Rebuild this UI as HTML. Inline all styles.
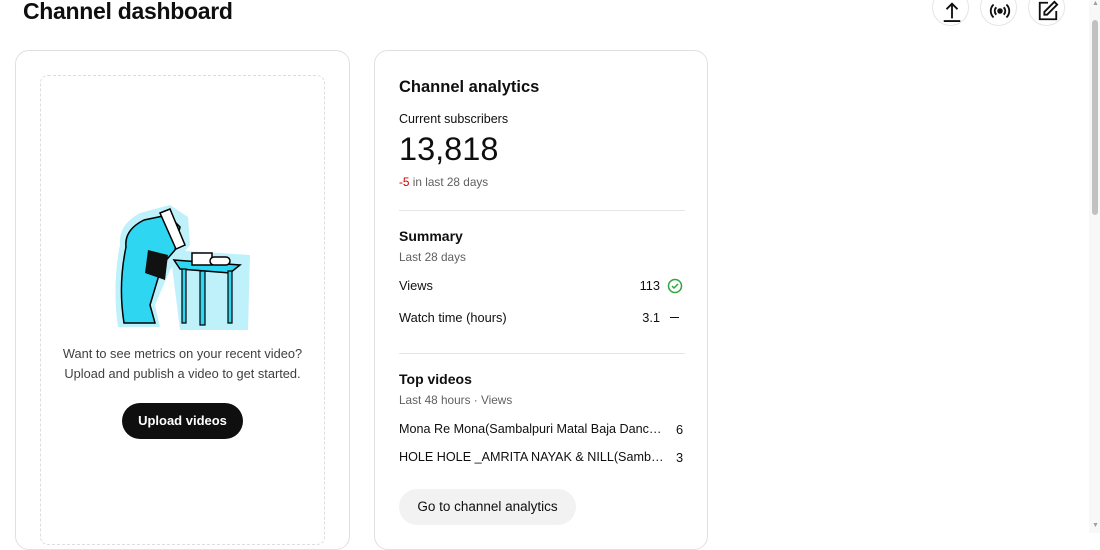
<!DOCTYPE html>
<html><head><meta charset="utf-8"><style>
*{box-sizing:border-box;margin:0;padding:0}
body{width:1100px;height:533px;overflow:hidden;background:#fff;font-family:"Liberation Sans",Arial,sans-serif;color:#0f0f0f;position:relative}
h1{position:absolute;left:23px;top:-2px;font-size:23px;font-weight:700;letter-spacing:-0.3px}
.ib{position:absolute;top:-11px;width:37px;height:37px;border-radius:50%;border:1px solid #e5e5e5;background:#fff}
.ib svg{position:absolute;left:8px;top:10px}
.card{position:absolute;top:50px;height:500px;border:1px solid #e0e0e0;border-radius:14px;background:#fff}
.dash{position:absolute;left:40px;top:75px;width:285px;height:470px;border:1px dashed #ddd;border-radius:8px}
.t{position:absolute;white-space:nowrap}
.g{color:#606060}
.hr{position:absolute;left:399px;width:286px;height:1px;background:#e5e5e5}
</style></head><body>
<h1>Channel dashboard</h1>
<div class="ib" style="left:932px"><svg width="22" height="22" viewBox="0 0 24 24" fill="none" stroke="#0f0f0f" stroke-width="2"><path d="M12 20V4M6 10l6-6 6 6M3 23h18"/></svg></div>
<div class="ib" style="left:980px"><svg width="22" height="22" viewBox="0 0 24 24" fill="none" stroke="#0f0f0f" stroke-width="2"><circle cx="12" cy="12" r="2" fill="#0f0f0f"/><path d="M8 8a5.5 5.5 0 0 0 0 8M16 8a5.5 5.5 0 0 1 0 8M5 5a9.5 9.5 0 0 0 0 14M19 5a9.5 9.5 0 0 1 0 14"/></svg></div>
<div class="ib" style="left:1028px"><svg width="22" height="22" viewBox="0 0 24 24" fill="none" stroke="#0f0f0f" stroke-width="2"><path d="M12 3H3v18h18v-9"/><path d="M19 2l3 3-11 11H8v-3z"/></svg></div>
<div style="position:absolute;left:1089px;top:0;width:11px;height:533px;background:#f8f8f8"></div>
<div style="position:absolute;left:1092px;top:20px;width:6px;height:195px;background:#c1c1c1;border-radius:3px"></div>
<div class="t" style="left:1092px;top:0;font-size:7px;color:#a0a0a0">▲</div>
<div class="t" style="left:1092px;top:522px;font-size:7px;color:#a0a0a0">▼</div>

<div class="card" style="left:15px;width:335px"></div>
<div class="dash"></div>
<svg style="position:absolute;left:110px;top:205px" width="142" height="128" viewBox="0 0 142 128">
<path d="M10 40 Q8 20 30 8 L60 0 L78 12 L80 40 L60 65 L45 100 L50 122 L8 122 Q2 80 10 40Z" fill="#bff1fb"/>
<path d="M60 45 L140 50 L138 125 L70 125 Z" fill="#bff1fb"/>
<path d="M16 42 Q14 25 34 15 L58 10 L70 22 L65 45 L52 60 L40 100 L45 118 L14 118 Q8 80 16 42Z" fill="#2fd6f2" stroke="#000" stroke-width="1.5"/>
<path d="M50 8 L60 4 L75 40 L66 44Z" fill="#fff" stroke="#000" stroke-width="1.5"/>
<path d="M38 45 L58 50 L55 75 L35 68Z" fill="#111"/>
<path d="M64 55 L130 60 L120 68 L70 64Z" fill="#2fd6f2" stroke="#000" stroke-width="1.5"/>
<path d="M72 64 L76 64 L76 118 L72 118Z M90 66 L95 66 L95 120 L90 120Z M118 66 L122 66 L122 118 L118 118Z" fill="#2fd6f2" stroke="#000" stroke-width="1.2"/>
<rect x="82" y="48" width="20" height="12" fill="#fff" stroke="#000" stroke-width="1.5"/>
<rect x="100" y="52" width="20" height="8" rx="4" fill="#fff" stroke="#000" stroke-width="1.5"/>
</svg>
<div class="t g" style="left:15px;width:335px;text-align:center;top:344px;font-size:12.8px;line-height:20px;color:#3f3f3f">Want to see metrics on your recent video?<br>Upload and publish a video to get started.</div>
<div class="t" style="left:122px;top:403px;width:121px;height:36px;border-radius:18px;background:#0f0f0f;color:#fff;font-size:13px;font-weight:700;text-align:center;line-height:36px">Upload videos</div>

<div class="card" style="left:374px;width:334px"></div>
<div class="t" style="left:399px;top:78px;font-size:16.5px;font-weight:700">Channel analytics</div>
<div class="t" style="left:399px;top:112px;font-size:12.5px">Current subscribers</div>
<div class="t" style="left:399px;top:131px;font-size:32.5px">13,818</div>
<div class="t g" style="left:399px;top:175px;font-size:11.8px"><span style="color:#c00">-5</span> in last 28 days</div>
<div class="hr" style="top:210px"></div>
<div class="t" style="left:399px;top:228px;font-size:14px;font-weight:700">Summary</div>
<div class="t g" style="left:399px;top:250px;font-size:11.8px">Last 28 days</div>
<div class="t" style="left:399px;top:278px;font-size:12.8px">Views</div>
<div class="t" style="left:630px;width:30px;text-align:right;top:278px;font-size:12.8px">113</div>
<svg style="position:absolute;left:667px;top:278px" width="16" height="16" viewBox="0 0 16 16" fill="none" stroke="#2ba640" stroke-width="1.5"><circle cx="8" cy="8" r="6.5"/><path d="M5 8l2 2 4-4"/></svg>
<div class="t" style="left:399px;top:310px;font-size:12.8px">Watch time (hours)</div>
<div class="t" style="left:620px;width:40px;text-align:right;top:310px;font-size:12.8px">3.1</div>
<div style="position:absolute;left:670px;top:317px;width:9px;height:1px;background:#0f0f0f"></div>
<div class="hr" style="top:353px"></div>
<div class="t" style="left:399px;top:371px;font-size:14px;font-weight:700">Top videos</div>
<div class="t g" style="left:399px;top:393px;font-size:11.8px">Last 48 hours · Views</div>
<div class="t" style="left:399px;top:422px;font-size:12.6px;width:266px;overflow:hidden;text-overflow:ellipsis">Mona Re Mona(Sambalpuri Matal Baja Dance Video)</div>
<div class="t" style="left:676px;top:422px;font-size:12.8px">6</div>
<div class="t" style="left:399px;top:450px;font-size:12.6px;width:266px;overflow:hidden;text-overflow:ellipsis">HOLE HOLE _AMRITA NAYAK &amp; NILL(Sambalpuri Song)</div>
<div class="t" style="left:676px;top:450px;font-size:12.8px">3</div>
<div class="t" style="left:399px;top:489px;width:177px;height:36px;border-radius:18px;background:#f2f2f2;font-size:13.5px;text-align:center;line-height:36px">Go to channel analytics</div>
</body></html>
